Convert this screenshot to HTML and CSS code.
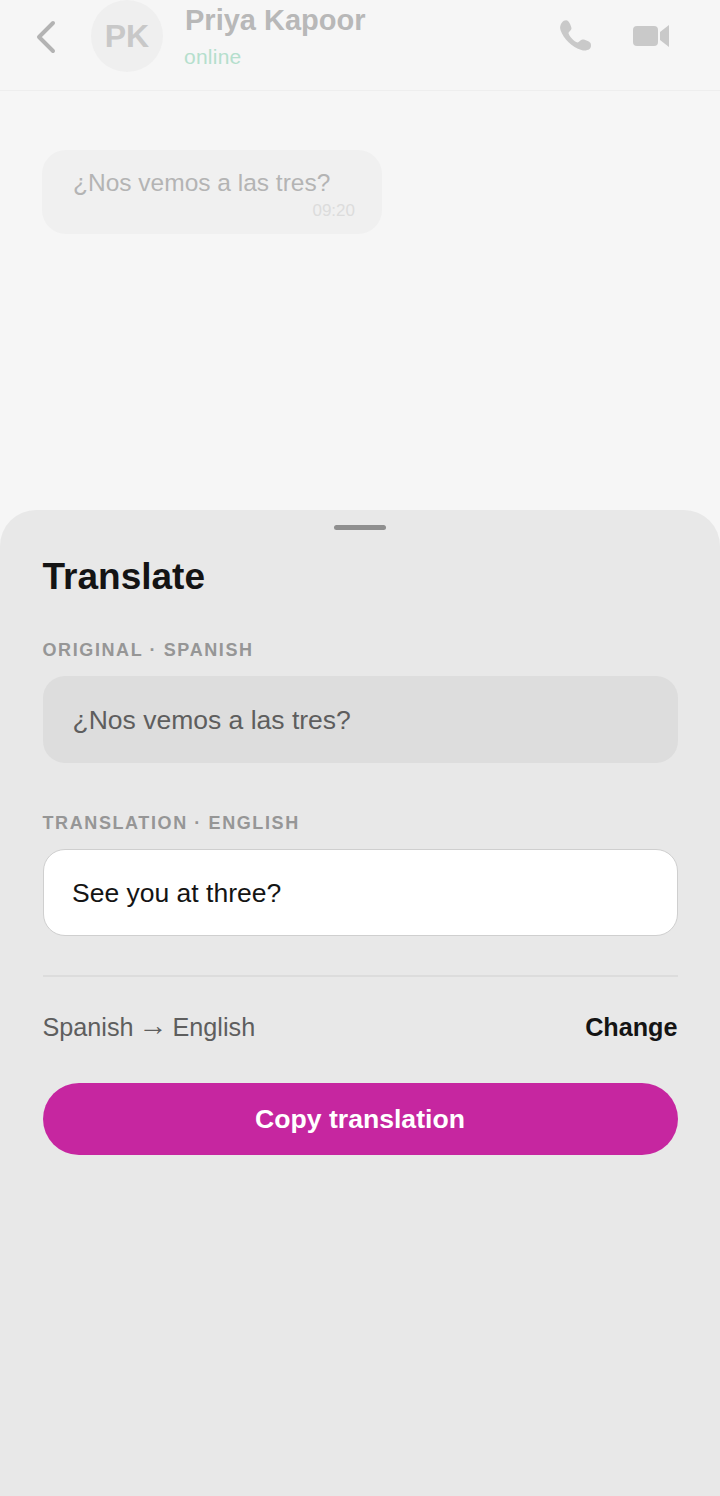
FILE: index.html
```html
<!DOCTYPE html>
<html lang="en">
<head>
    <meta charset="UTF-8">
    <meta name="viewport" content="width=device-width, initial-scale=1.0">
    <title>Translate</title>
    <link rel="stylesheet" href="styles.css">
</head>
<body>
    <div class="page">
        <div class="chat_header">
            <svg class="back_icon" width="22" height="34" viewBox="0 0 22 34"><path d="M18 3 L4 17 L18 31" fill="none" stroke="#b3b3b3" stroke-width="4" stroke-linecap="round" stroke-linejoin="round"/></svg>
            <div class="avatar">PK</div>
            <div class="contact">
                <div class="contact_name">Priya Kapoor</div>
                <div class="contact_status">online</div>
            </div>
            <div class="header_icons">
                <svg width="36" height="36" viewBox="0 0 36 36"><path d="M4 4.5 C5.5 2.5 8.5 1.5 10 3 C11.5 4.5 13.5 8.5 13.5 10.5 C13.5 12.5 10.5 13.5 10.5 15 C10.5 17.5 16.5 24 19.5 24.5 C21 24.5 22.5 21.5 24.5 21.5 C27 21.5 31.5 23.5 32.5 25 C33.5 27 33 30 31.5 31 C29.5 32.5 26 33 23.5 32 C14 29 5.5 21 2.5 12 C1.5 9 2.5 6.5 4 4.5 Z" fill="#c9c9c9"/></svg>
                <svg width="36" height="22" viewBox="0 0 36 22"><rect x="0" y="1" width="25" height="20" rx="4" fill="#c9c9c9"/><path d="M27 7 L36 0 V22 L27 15 Z" fill="#c9c9c9"/></svg>
            </div>
        </div>

        <div class="chat_area">
            <div class="bubble">
                <div class="bubble_text">¿Nos vemos a las tres?</div>
                <div class="bubble_time">09:20</div>
            </div>
        </div>

        <div class="sheet">
            <div class="handle"></div>
            <h1 class="sheet_title">Translate</h1>

            <div class="field_label">ORIGINAL · SPANISH</div>
            <div class="text_box original_box">¿Nos vemos a las tres?</div>

            <div class="field_label">TRANSLATION · ENGLISH</div>
            <div class="text_box translation_box">See you at three?</div>

            <div class="lang_row">
                <span class="lang_pair">Spanish <span class="lang_arrow">→</span> English</span>
                <span class="change_link">Change</span>
            </div>

            <button class="copy_button">Copy translation</button>
        </div>
    </div>
</body>
</html>
```

FILE: styles.css
```css
html, body {
    margin: 0;
    padding: 0;
}
body {
    font-family: "Liberation Sans", Arial, sans-serif;
    background: #f6f6f6;
}
.page {
    width: 720px;
    height: 1496px;
    display: flex;
    flex-direction: column;
    overflow: hidden;
}
.chat_header {
    height: 90px;
    flex: none;
    display: flex;
    align-items: flex-start;
    border-bottom: 1px solid #eeeeee;
    box-sizing: content-box;
}
.back_icon {
    margin: 20px 0 0 35px;
}
.avatar {
    width: 72px;
    height: 72px;
    margin-left: 34px;
    border-radius: 50%;
    background: #efefef;
    color: #c8c8c8;
    font-size: 32px;
    font-weight: 700;
    line-height: 72px;
    text-align: center;
}
.contact {
    margin-left: 22px;
    flex: 1;
}
.contact_name {
    margin-top: 3px;
    font-size: 29px;
    line-height: 34px;
    font-weight: 700;
    color: #b8b8b8;
}
.contact_status {
    margin: 7px 0 0 -1px;
    font-size: 21px;
    line-height: 26px;
    letter-spacing: 0.25px;
    color: #b5dfcd;
}
.header_icons {
    display: flex;
    align-items: center;
    gap: 39px;
    margin: 18px 51px 0 0;
}
.chat_area {
    flex: 1;
    padding: 59px 0 0 42px;
}
.bubble {
    width: 340px;
    height: 84px;
    box-sizing: border-box;
    padding: 18px 27px 0 31px;
    border-radius: 24px;
    background: #f0f0f0;
}
.bubble_text {
    font-size: 24.5px;
    line-height: 30px;
    color: #b4b4b4;
}
.bubble_time {
    margin-top: 3px;
    font-size: 17px;
    line-height: 20px;
    text-align: right;
    color: #dcdcdc;
}
.sheet {
    height: 986px;
    flex: none;
    box-sizing: border-box;
    padding: 15px 42.5px 0 42.5px;
    border-radius: 36px 36px 0 0;
    background: #e8e8e8;
}
.handle {
    width: 52px;
    height: 5px;
    margin: 0 auto;
    border-radius: 3px;
    background: #8f8f8f;
}
.sheet_title {
    margin: 23px 0 0 0;
    font-size: 37px;
    line-height: 48px;
    font-weight: 700;
    color: #141414;
}
.field_label {
    margin-top: 38px;
    font-size: 18px;
    line-height: 22px;
    font-weight: 700;
    letter-spacing: 1.6px;
    color: #969696;
}
.text_box {
    height: 87px;
    box-sizing: border-box;
    margin-top: 15px;
    border-radius: 22px;
    font-size: 26.5px;
    line-height: 87px;
}
.original_box {
    padding: 0 30px;
    line-height: 89px;
    background: #dddddd;
    color: #5e5e5e;
}
.original_box + .field_label {
    margin-top: 49px;
}
.translation_box {
    padding: 0 28.5px;
    line-height: 87px;
    background: #ffffff;
    border: 1px solid #cfcfcf;
    color: #141414;
}
.lang_row {
    margin-top: 39px;
    padding-top: 34px;
    border-top: 2px solid #dcdcdc;
    display: flex;
    justify-content: space-between;
    font-size: 25.2px;
    line-height: 32px;
}
.lang_pair {
    color: #5e5e5e;
}
.lang_arrow {
    margin: 0 -2px;
    font-size: 29px;
    line-height: 0;
    vertical-align: 1px;
}
.change_link {
    font-weight: 700;
    color: #141414;
}
.copy_button {
    display: block;
    width: 100%;
    height: 72px;
    margin-top: 40px;
    padding: 0;
    border: none;
    border-radius: 36px;
    background: #c626a0;
    color: #ffffff;
    font-family: inherit;
    font-size: 26.6px;
    font-weight: 700;
}
```
